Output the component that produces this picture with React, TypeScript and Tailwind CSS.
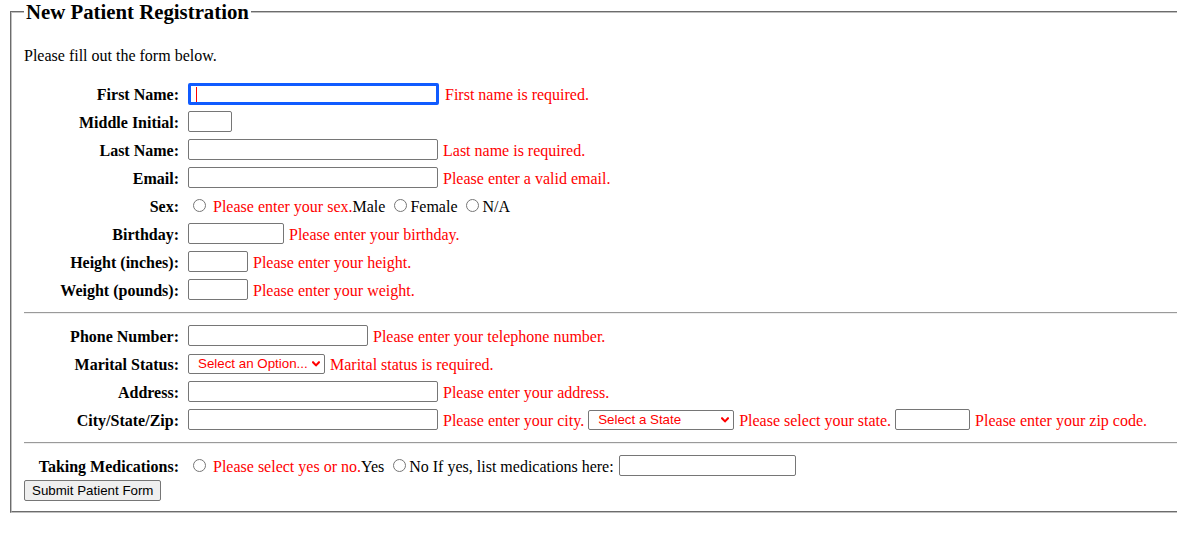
import React from "react";

const serif = "font-['Liberation_Serif','Times_New_Roman',serif]";
const sans = "font-['Liberation_Sans',Arial,sans-serif]";

function TInput({ w }: { w: string }) {
  return (
    <input
      type="text"
      readOnly
      className={`${w} h-[21px] shrink-0 border border-[#767676] rounded-[2px] bg-white px-[2px] text-[13.33px] ${sans}`}
    />
  );
}

function Txt({ children, cls = "" }: { children: React.ReactNode; cls?: string }) {
  return <span className={`pt-[2px] whitespace-nowrap ${cls}`}>{children}</span>;
}

function Err({ children, ml = "ml-[5px]" }: { children: React.ReactNode; ml?: string }) {
  return <Txt cls={`${ml} text-[#ff0000]`}>{children}</Txt>;
}

function Chevron() {
  return (
    <svg width="8" height="6" viewBox="0 0 8 6" className="shrink-0">
      <path d="M1 1.2 L4 4.4 L7 1.2" fill="none" stroke="#ff0000" strokeWidth="2.1" strokeLinecap="round" strokeLinejoin="round" />
    </svg>
  );
}

function FakeSelect({ w, label }: { w: string; label: string }) {
  return (
    <div
      className={`${w} h-[20px] shrink-0 flex items-center justify-between border border-[#767676] rounded-[2px] bg-white pl-[9px] pr-[4px] text-[13.33px] leading-[15px] text-[#ff0000] ${sans}`}
    >
      <span className="whitespace-nowrap">{label}</span>
      <Chevron />
    </div>
  );
}

function Radio({ ml = "ml-[5px]" }: { ml?: string }) {
  return <input type="radio" readOnly className={`${ml} mr-[3px] h-[13px] w-[13px] shrink-0`} />;
}

function Row({ label, children }: { label?: string; children: React.ReactNode }) {
  return (
    <div className="flex h-[28px] items-center">
      <div className="w-[155px] shrink-0 pt-[2px] text-right font-bold leading-[18px] whitespace-nowrap">{label}</div>
      <div className="ml-[9px] flex items-center leading-[18px] whitespace-nowrap">{children}</div>
    </div>
  );
}

function Hr() {
  return <div className="mt-[8px] mb-[8px] h-[2px] border-t border-b border-t-[#9a9a9a] border-b-[#eeeeee]" />;
}

export default function App() {
  return (
    <div className={`w-full overflow-hidden bg-white text-[16px] text-black ${serif}`}>
      <fieldset className="ml-[10px] w-[1200px] border-2 border-[#c0c0c0] [border-style:groove] pt-[5.6px] px-[12px] pb-[10px]">
        <legend className="px-[2px] text-[20.8px] font-bold leading-[24px]">New Patient Registration</legend>
        <p className="mt-[17px] leading-[18px]">Please fill out the form below.</p>
        <div className="mt-[15px]">
          <Row label="First Name:">
            <div className="relative h-[22px] w-[251px] shrink-0 border-[3px] border-[#105bff] rounded-[2px] bg-white">
              <span className="absolute left-[5px] top-[1px] h-[15px] w-[1px] bg-[#ff0000]" />
            </div>
            <Err ml="ml-[6px]">First name is required.</Err>
          </Row>
          <Row label="Middle Initial:">
            <TInput w="w-[44px]" />
          </Row>
          <Row label="Last Name:">
            <TInput w="w-[250px]" />
            <Err>Last name is required.</Err>
          </Row>
          <Row label="Email:">
            <TInput w="w-[250px]" />
            <Err>Please enter a valid email.</Err>
          </Row>
          <Row label="Sex:">
            <Radio />
            <Txt cls="ml-[4px]">
              <span className="text-[#ff0000]">Please enter your sex.</span>Male
            </Txt>
            <Radio ml="ml-[9px]" />
            <Txt>Female</Txt>
            <Radio ml="ml-[9px]" />
            <Txt>N/A</Txt>
          </Row>
          <Row label="Birthday:">
            <TInput w="w-[96px]" />
            <Err>Please enter your birthday.</Err>
          </Row>
          <Row label="Height (inches):">
            <TInput w="w-[60px]" />
            <Err>Please enter your height.</Err>
          </Row>
          <Row label="Weight (pounds):">
            <TInput w="w-[60px]" />
            <Err>Please enter your weight.</Err>
          </Row>
        </div>
        <Hr />
        <div>
          <Row label="Phone Number:">
            <TInput w="w-[180px]" />
            <Err>Please enter your telephone number.</Err>
          </Row>
          <Row label="Marital Status:">
            <FakeSelect w="w-[137px]" label="Select an Option..." />
            <Err>Marital status is required.</Err>
          </Row>
          <Row label="Address:">
            <TInput w="w-[250px]" />
            <Err>Please enter your address.</Err>
          </Row>
          <Row label="City/State/Zip:">
            <TInput w="w-[250px]" />
            <Err>Please enter your city.</Err>
            <div className="ml-[4px]">
              <FakeSelect w="w-[146px]" label="Select a State" />
            </div>
            <Err>Please select your state.</Err>
            <div className="ml-[4px]">
              <TInput w="w-[75px]" />
            </div>
            <Err>Please enter your zip code.</Err>
          </Row>
        </div>
        <Hr />
        <Row label="Taking Medications:">
          <Radio />
          <Txt cls="ml-[4px]">
            <span className="text-[#ff0000]">Please select yes or no.</span>Yes
          </Txt>
          <Radio ml="ml-[9px]" />
          <Txt>No If yes, list medications here:</Txt>
          <div className="ml-[5px]">
            <TInput w="w-[177px]" />
          </div>
        </Row>
        <div className="flex">
          <button
            type="button"
            className={`h-[21px] border border-[#767676] rounded-[2px] bg-[#efefef] px-[7px] text-[13.33px] leading-[15px] text-black ${sans}`}
          >
            Submit Patient Form
          </button>
        </div>
      </fieldset>
    </div>
  );
}
